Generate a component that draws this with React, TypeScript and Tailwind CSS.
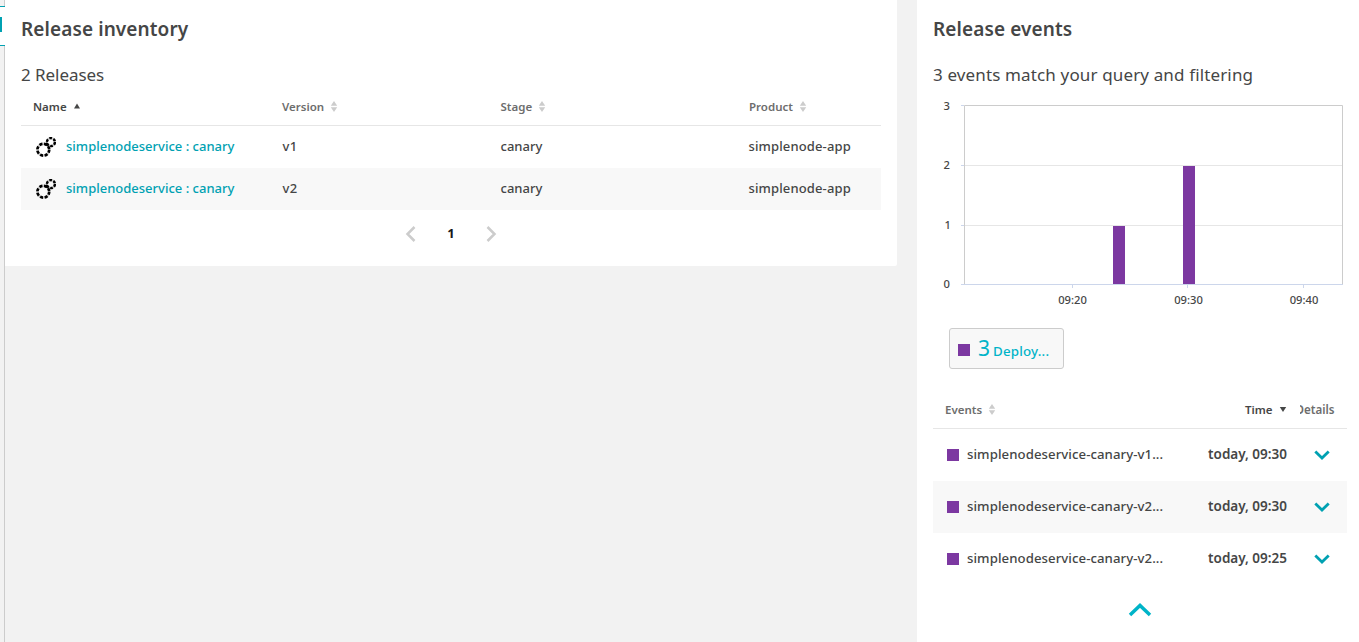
import React from "react";

type SortState = "none" | "asc" | "desc";

function SortIcon({ state }: { state: SortState }) {
  if (state === "asc") {
    return (
      <svg className="h-3 w-2" viewBox="0 0 8 12">
        <path d="M4 2.500 7 7.500H1Z" fill="#454646" />
      </svg>
    );
  }
  if (state === "desc") {
    return (
      <svg className="h-3 w-2" viewBox="0 0 8 12">
        <path d="M4 8 .8 3H7.200Z" fill="#454646" />
      </svg>
    );
  }
  return (
    <svg className="h-3 w-2" viewBox="0 0 8 12">
      <path d="M4 0 7.200 4.800H.8ZM4 11 .8 6.200H7.200Z" fill="#ccc" />
    </svg>
  );
}

function ReleaseIcon() {
  return (
    <svg className="h-5 w-5" viewBox="0 0 20 20" fill="none">
      <circle cx="7.300" cy="12.700" r="5.900" stroke="#ccc" strokeWidth="2.400" />
      <circle cx="14.900" cy="5.100" r="4" stroke="#ccc" strokeWidth="2" />
      <circle cx="7.300" cy="12.700" r="5.900" stroke="#000" strokeWidth="2.700" strokeDasharray="3 1.634" />
      <circle cx="14.900" cy="5.100" r="4" stroke="#000" strokeWidth="2.400" strokeDasharray="2.700 1.489" />
      <circle cx="10.700" cy="7.200" r="1.700" fill="#000" />
    </svg>
  );
}

function Chevron({ className, d }: { className: string; d: string }) {
  return (
    <svg className={className} viewBox="0 0 24 24" fill="none" stroke="currentColor">
      <path d={d} />
    </svg>
  );
}

function Header({ label, state = "none", className = "" }: { label: string; state?: SortState; className?: string }) {
  const tone = state === "none" ? "text-[#6d6d6d]" : "text-[#454646]";
  return (
    <div className={`flex items-center gap-[6px] text-[11.5px] font-semibold ${tone} ${className}`}>
      <span>{label}</span>
      <SortIcon state={state} />
    </div>
  );
}

const releases = [
  { name: "simplenodeservice : canary", version: "v1", stage: "canary", product: "simplenode-app" },
  { name: "simplenodeservice : canary", version: "v2", stage: "canary", product: "simplenode-app" },
];

const events = [
  { name: "simplenodeservice-canary-v1...", time: "today, 09:30" },
  { name: "simplenodeservice-canary-v2...", time: "today, 09:30" },
  { name: "simplenodeservice-canary-v2...", time: "today, 09:25" },
];

function EventChart() {
  return (
    <svg className="block h-[210px] w-[414px] shrink-0 font-medium" viewBox="0 0 414 210" fontSize="11.2" fill="#454646">
      <g strokeWidth="1" fill="none">
        <path d="M31 68.5H409M31 128.5H409" stroke="#e6e6e6" />
        <path d="M31.5 187V8.5H409.5V187" stroke="#ccc" />
        <path d="M28 8.5H31M28 68.5H31M28 128.5H31M28 187.5H410M139.5 188V191M254.5 188V191M370.5 188V191" stroke="#ccd6eb" />
      </g>
      <rect x="180" y="129" width="12" height="58" fill="#7c38a1" />
      <rect x="250" y="69" width="12" height="118" fill="#7c38a1" />
      <g textAnchor="end">
        <text x="17" y="13">3</text>
        <text x="17" y="72">2</text>
        <text x="18" y="132">1</text>
        <text x="17" y="191">0</text>
      </g>
      <g textAnchor="middle">
        <text x="139.5" y="207">09:20</text>
        <text x="255.5" y="207">09:30</text>
        <text x="371" y="207">09:40</text>
      </g>
    </svg>
  );
}

export default function App() {
  return (
    <div className="flex h-[642px] w-[1359px] overflow-hidden bg-[#f2f2f2] font-['Noto_Sans',sans-serif] text-[#454646]">
      <div className="flex w-[5px] shrink-0 flex-col">
        <div className="h-[6px] border-r border-[#ccc]" />
        <div className="h-10 border-y border-[#00a1b2] bg-white pt-[10px]">
          <div className="h-[15px] w-[2px] bg-[#00a1b2]" />
        </div>
        <div className="flex-1 border-r border-[#ccc]" />
      </div>

      <section className="h-[266px] w-[892px] shrink-0 rounded-br-[2px] bg-white px-4">
        <h1 className="mt-4 h-[26px] text-[19px] leading-[26px] font-semibold tracking-[0.1px]">Release inventory</h1>
        <h2 className="mt-[20px] h-[26px] text-[17px] leading-[26px] tracking-[-0.05px]">2 Releases</h2>
        <div className="grid h-[38px] w-[860px] grid-cols-[249px_218.500px_248.500px_144px] border-b border-[#e6e6e6] pl-3">
          <Header label="Name" state="asc" />
          <Header label="Version" />
          <Header label="Stage" />
          <Header label="Product" />
        </div>
        {releases.map((r, i) => (
          <div
            key={r.version}
            className={`grid h-[42px] w-[860px] grid-cols-[249.500px_218px_248px_144.500px] items-center pl-3 text-[13px] font-medium ${i % 2 ? "bg-[#f8f8f8]" : ""}`}
          >
            <div className="flex items-center gap-[10px] pl-[3px] text-[#00a1b2]">
              <ReleaseIcon />
              <span>{r.name}</span>
            </div>
            <div className="tracking-[0.3px]">{r.version}</div>
            <div>{r.stage}</div>
            <div className="tracking-[0.13px]">{r.product}</div>
          </div>
        ))}
        <div className="flex h-12 items-center justify-center gap-6">
          <Chevron className="h-6 w-6 stroke-[2.5] text-[#ccc]" d="M15.5 5 8.5 12l7 7" />
          <span className="text-[13px] font-bold text-[#191919]">1</span>
          <Chevron className="h-6 w-6 stroke-[2.5] text-[#ccc]" d="m8.500 5 7 7-7 7" />
        </div>
      </section>

      <section className="ml-5 flex flex-1 flex-col bg-white px-4">
        <h1 className="mt-4 h-[26px] text-[19px] leading-[26px] font-semibold tracking-[0.1px]">Release events</h1>
        <h2 className="mt-[20px] h-[26px] text-[17px] leading-[26px] tracking-[0.14px] whitespace-nowrap">3 events match your query and filtering</h2>
        <div className="mt-[9px]">
          <EventChart />
        </div>
        <div className="mt-[21px] ml-4 flex h-[41px] w-[115px] items-center rounded-[3px] border border-[#ccc] bg-[#f8f8f8] pl-2 text-[#00b4c8]">
          <span className="mt-[2px] h-3 w-3 bg-[#7c38a1]" />
          <span className="ml-2 text-[21px]">3</span>
          <span className="mt-[6px] ml-[3px] text-[13.3px] font-medium tracking-[0.2px]">Deploy...</span>
        </div>
        <div className="mt-[21px] flex h-[39px] w-[414px] shrink-0 items-center border-b border-[#e6e6e6] pt-[2px] pl-3">
          <Header label="Events" className="w-[300px]" />
          <Header label="Time" state="desc" />
          <div className="ml-[13px] flex w-[35px] justify-end overflow-hidden text-[11.6px] font-semibold text-[#6d6d6d]">
            <span>Details</span>
          </div>
        </div>
        {events.map((e, i) => (
          <div
            key={i}
            className={`flex h-[52px] w-[414px] shrink-0 items-center pl-[14px] text-[13.2px] font-medium ${i % 2 ? "bg-[#f8f8f8]" : ""}`}
          >
            <span className="mr-2 h-3 w-3 bg-[#7c38a1]" />
            <span className="w-[220px] tracking-[0.07px]">{e.name}</span>
            <span className="-mt-[2px] w-[100px] text-right text-[13.5px] font-semibold">{e.time}</span>
            <Chevron className="ml-[23px] h-6 w-6 stroke-[2.8] text-[#00a1b2]" d="m5.300 8.500 6.700 6.500L18.700 8.500" />
          </div>
        ))}
        <div className="flex w-[414px] justify-center pt-[13px]">
          <Chevron className="h-6 w-6 stroke-[3.5] text-[#00b4c8]" d="m2 17 10-9.500L22 17" />
        </div>
      </section>
    </div>
  );
}
